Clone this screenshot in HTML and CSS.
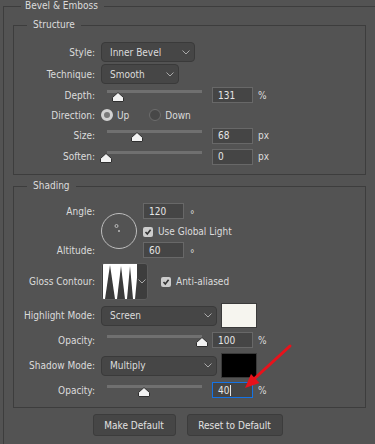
FILE: index.html
```html
<!DOCTYPE html>
<html lang="en">
<head>
    <meta charset="UTF-8">
    <title>Bevel &amp; Emboss</title>
    <link rel="stylesheet" href="styles.css">
</head>
<body>

    <fieldset class="group outer">
        <legend>Bevel &amp; Emboss</legend>

        <fieldset class="group inner structure">
            <legend>Structure</legend>

            <div class="row row-select">
                <span class="label">Style:</span>
                <div class="select select-style">
                    <span>Inner Bevel</span>
                    <svg class="chev" width="8" height="5" viewBox="0 0 8 5"><polyline points="0.5,0.5 4,4 7.5,0.5"/></svg>
                </div>
            </div>
            <div class="row row-select">
                <span class="label">Technique:</span>
                <div class="select select-technique">
                    <span>Smooth</span>
                    <svg class="chev" width="8" height="5" viewBox="0 0 8 5"><polyline points="0.5,0.5 4,4 7.5,0.5"/></svg>
                </div>
            </div>
            <div class="row row-slider">
                <span class="label">Depth:</span>
                <div class="slider">
                    <div class="track"></div>
                    <svg class="thumb" style="left: 5px" width="12" height="10" viewBox="0 0 12 10"><path d="M6 0.5 L11.5 5.5 V9 Q11.5 9.5 11 9.5 H1 Q0.5 9.5 0.5 9 V5.5 Z"/></svg>
                </div>
                <div class="field">131</div>
                <span class="unit">%</span>
            </div>
            <div class="row row-radio">
                <span class="label">Direction:</span>
                <span class="radio checked"></span><span class="radio-text">Up</span>
                <span class="radio"></span><span class="radio-text">Down</span>
            </div>
            <div class="row row-slider row-tall">
                <span class="label">Size:</span>
                <div class="slider">
                    <div class="track"></div>
                    <svg class="thumb" style="left: 24px" width="12" height="10" viewBox="0 0 12 10"><path d="M6 0.5 L11.5 5.5 V9 Q11.5 9.5 11 9.5 H1 Q0.5 9.5 0.5 9 V5.5 Z"/></svg>
                </div>
                <div class="field">68</div>
                <span class="unit">px</span>
            </div>
            <div class="row row-slider row-tall">
                <span class="label">Soften:</span>
                <div class="slider">
                    <div class="track"></div>
                    <svg class="thumb" style="left: -7px" width="12" height="10" viewBox="0 0 12 10"><path d="M6 0.5 L11.5 5.5 V9 Q11.5 9.5 11 9.5 H1 Q0.5 9.5 0.5 9 V5.5 Z"/></svg>
                </div>
                <div class="field">0</div>
                <span class="unit">px</span>
            </div>
        </fieldset>

        <fieldset class="group inner shading">
            <legend>Shading</legend>

            <div class="angle-block">
                <span class="label angle-label">Angle:</span>
                <svg class="dial" width="36" height="36" viewBox="0 0 36 36">
                    <circle cx="18" cy="18" r="17.5" fill="none" stroke="#bdbdbd"/>
                    <circle cx="15.5" cy="13" r="1.5" fill="none" stroke="#bdbdbd"/>
                    <circle cx="18" cy="18" r="1" fill="#bdbdbd"/>
                </svg>
                <div class="angle-field">
                    <div class="field">120</div>
                    <span class="deg">°</span>
                </div>
                <div class="check-line global-light">
                    <svg class="check" width="10" height="10" viewBox="0 0 10 10"><rect width="10" height="10" rx="2"/><polyline points="2.5,5 4.3,7 7.6,2.8"/></svg>
                    <span>Use Global Light</span>
                </div>
                <span class="label altitude-label">Altitude:</span>
                <div class="altitude-field">
                    <div class="field">60</div>
                    <span class="deg">°</span>
                </div>
            </div>

            <div class="row row-contour">
                <span class="label">Gloss Contour:</span>
                <div class="contour">
                    <svg class="contour-preview" width="34" height="35" viewBox="0 0 34 35">
                        <rect width="34" height="35" fill="#ffffff"/>
                        <polygon points="2,35 7,1 12,35" fill="#3b3b3b"/>
                        <polygon points="14,35 18,2 22,35" fill="#3b3b3b"/>
                        <polygon points="24,35 27,2 30,35" fill="#3b3b3b"/>
                        <polygon points="32,35 34,14 34,35" fill="#3b3b3b"/>
                    </svg>
                    <div class="contour-drop">
                        <svg class="chev" width="8" height="5" viewBox="0 0 8 5"><polyline points="0.5,0.5 4,4 7.5,0.5"/></svg>
                    </div>
                </div>
                <div class="check-line anti">
                    <svg class="check" width="10" height="10" viewBox="0 0 10 10"><rect width="10" height="10" rx="2"/><polyline points="2.5,5 4.3,7 7.6,2.8"/></svg>
                    <span>Anti-aliased</span>
                </div>
            </div>

            <div class="row row-mode">
                <span class="label">Highlight Mode:</span>
                <div class="select select-mode">
                    <span>Screen</span>
                    <svg class="chev" width="8" height="5" viewBox="0 0 8 5"><polyline points="0.5,0.5 4,4 7.5,0.5"/></svg>
                </div>
                <div class="swatch swatch-light"></div>
            </div>
            <div class="row row-slider row-opacity">
                <span class="label">Opacity:</span>
                <div class="slider">
                    <div class="track"></div>
                    <svg class="thumb" style="left: 89px" width="12" height="10" viewBox="0 0 12 10"><path d="M6 0.5 L11.5 5.5 V9 Q11.5 9.5 11 9.5 H1 Q0.5 9.5 0.5 9 V5.5 Z"/></svg>
                </div>
                <div class="field">100</div>
                <span class="unit">%</span>
            </div>
            <div class="row row-mode">
                <span class="label">Shadow Mode:</span>
                <div class="select select-mode">
                    <span>Multiply</span>
                    <svg class="chev" width="8" height="5" viewBox="0 0 8 5"><polyline points="0.5,0.5 4,4 7.5,0.5"/></svg>
                </div>
                <div class="swatch swatch-dark"></div>
            </div>
            <div class="row row-slider row-opacity">
                <span class="label">Opacity:</span>
                <div class="slider">
                    <div class="track"></div>
                    <svg class="thumb" style="left: 31px" width="12" height="10" viewBox="0 0 12 10"><path d="M6 0.5 L11.5 5.5 V9 Q11.5 9.5 11 9.5 H1 Q0.5 9.5 0.5 9 V5.5 Z"/></svg>
                </div>
                <div class="field active">40<span class="caret"></span></div>
                <span class="unit">%</span>
            </div>
        </fieldset>

        <div class="buttons">
            <button class="btn btn-make">Make Default</button>
            <button class="btn btn-reset">Reset to Default</button>
        </div>
    </fieldset>

    <!-- red pointer drawn over the shadow opacity field -->
    <svg class="arrow" width="375" height="444" viewBox="0 0 375 444">
        <line x1="290" y1="346" x2="254" y2="379" stroke="#e8121b" stroke-width="3" stroke-linecap="round"/>
        <polygon points="245,388 251,374 259.5,383" fill="#e8121b"/>
    </svg>

</body>
</html>
```

FILE: styles.css
```css
:root {
    --bg-color: #535353;
    --line-color: #3d3d3d;
    --text-color: #dcdcdc;
    --control-bg: #464646;
    --field-border: #686868;
    --track-color: #707070;
}
body {
    font-family: "DejaVu Sans Condensed", "DejaVu Sans", sans-serif;
    font-size: 10px;
    color: var(--text-color);
    background-color: var(--bg-color);
    margin: 0;
    width: 375px;
    height: 444px;
    overflow: hidden;
    position: relative;
}
.group { border: 1px solid var(--line-color); margin: 0; min-width: 0; }
legend { line-height: 12px; font-size: 10px; }

.outer { box-sizing: border-box; width: 372px; height: 460px; margin-left: 3px; padding: 7px 13px 0 9px; border-right: none; border-bottom: none; }
.outer > legend { margin-left: 8px; padding: 0 6px 0 4px; }

.inner { box-sizing: border-box; width: 353px; margin-right: -4px; padding: 10px 0 7px 0; }
.inner > legend { margin-left: 13px; padding: 0 6px; }
.shading { margin-top: 5px; padding: 11px 0 7px 0; }

.row { display: flex; align-items: center; }
.label { flex: none; width: 81px; margin-right: 6px; text-align: right; white-space: nowrap; }

.row-select { height: 22px; }
.row-slider { height: 20px; }
.row-radio { height: 20px; }
.row-tall { height: 21px; }

/* dropdowns */
.select { box-sizing: border-box; height: 20px; display: flex; align-items: center; padding-left: 8px; background: var(--control-bg); border: 1px solid #3a3a3a; border-radius: 4px; }
.select-style { width: 94px; }
.select-technique { width: 78px; }
.select-mode { width: 116px; }
.chev { margin-left: auto; margin-right: 4px; }
.chev polyline { fill: none; stroke: #a9a9a9; stroke-width: 1; }

/* sliders */
.slider { flex: none; position: relative; align-self: stretch; width: 95px; margin-left: 6px; padding-top: 5px; }
.track { height: 3px; background: var(--track-color); }
.thumb { position: absolute; top: 7px; }
.thumb path { fill: #f2f2f2; stroke: #2f2f2f; stroke-width: 1; }

/* number fields */
.field { box-sizing: border-box; flex: none; width: 41px; height: 16px; display: flex; align-items: center; padding-left: 5px; background: #454545; border: 1px solid var(--field-border); color: #e6e6e6; }
.row-slider .field { margin-left: 10px; }
.field.active { border-color: #1473e6; }
.caret { display: inline-block; width: 1px; height: 11px; margin-left: 1px; background: #e6e6e6; }
.unit { margin-left: 5px; }

/* radios */
.radio { box-sizing: border-box; flex: none; width: 12px; height: 12px; border-radius: 50%; border: 1px solid #6c6c6c; background: #474747; }
.radio.checked { border: 3px solid #d2d2d2; background: #7a7a7a; }
.radio-text { margin-left: 4px; margin-right: 20px; }

/* angle / altitude */
.angle-block { display: grid; grid-template-columns: 81px 36px auto; grid-template-rows: 16px 23px 16px; column-gap: 6px; align-items: center; }
.angle-block .label { width: auto; margin-right: 0; }
.angle-label { grid-column: 1; grid-row: 1; }
.altitude-label { grid-column: 1; grid-row: 3; }
.dial { grid-column: 2; grid-row: 1 / 4; }
.angle-field { grid-column: 3; grid-row: 1; display: flex; align-items: center; }
.altitude-field { grid-column: 3; grid-row: 3; display: flex; align-items: center; }
.global-light { grid-column: 3; grid-row: 2; padding-top: 2px; }
.deg { margin-left: 6px; padding-top: 6px; font-size: 10px; }

.check-line { display: flex; align-items: center; gap: 5px; }
.check rect { fill: #cdcdcd; }
.check polyline { fill: none; stroke: #333333; stroke-width: 1.6; }

/* gloss contour */
.row-contour { height: 37px; margin-top: 5px; }
.contour { box-sizing: border-box; width: 47px; height: 37px; display: flex; border: 1px solid #5c5c5c; border-radius: 3px; background: #3d3d3d; overflow: hidden; }
.contour-preview { display: block; margin: 0 0 0 1px; }
.contour-drop { flex: 1; display: flex; align-items: center; }
.contour-drop .chev { margin: 0 auto; }
.anti { margin-left: 13px; }

/* modes and colour swatches */
.row-mode { height: 25px; margin-top: 3px; }
.row-opacity { margin-top: 2px; }
.swatch { box-sizing: border-box; width: 36px; height: 25px; margin-left: 4px; border: 1px solid #3a3a3a; }
.swatch-light { background: #f6f5ef; }
.swatch-dark { background: #000000; }

/* buttons */
.buttons { display: flex; justify-content: center; gap: 11px; margin-top: 6px; }
.btn { box-sizing: border-box; height: 22px; padding: 0; font-family: inherit; font-size: 10px; color: #e2e2e2; background: #464646; border: 1px solid #3c3c3c; border-radius: 3px; }
.btn-make { width: 83px; }
.btn-reset { width: 96px; }

.arrow { position: absolute; top: 0; left: 0; pointer-events: none; }
```
